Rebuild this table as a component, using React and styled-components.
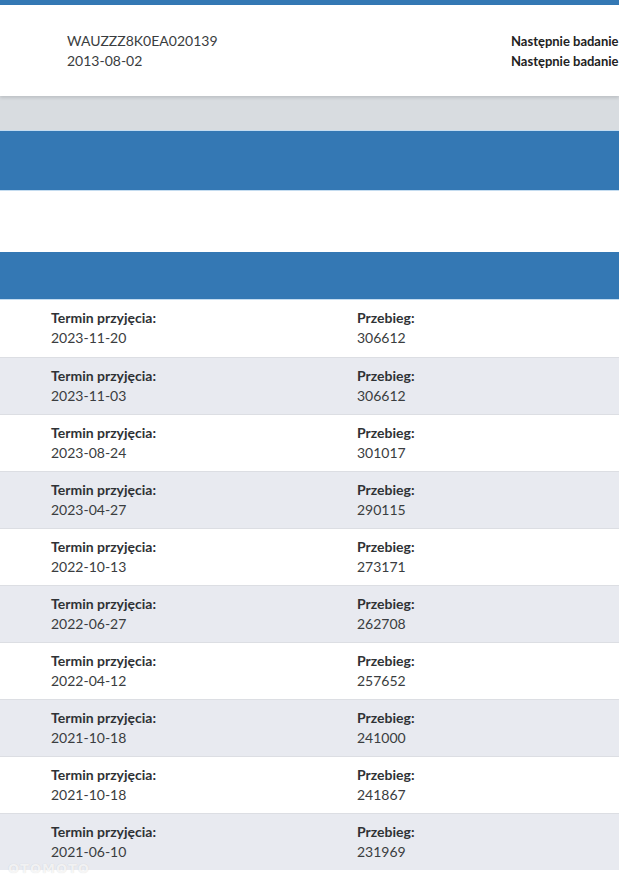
import React from 'react'
import styled, { createGlobalStyle } from 'styled-components'

const rows = [
	['2023-11-20', '306612'],
	['2023-11-03', '306612'],
	['2023-08-24', '301017'],
	['2023-04-27', '290115'],
	['2022-10-13', '273171'],
	['2022-06-27', '262708'],
	['2022-04-12', '257652'],
	['2021-10-18', '241000'],
	['2021-10-18', '241867'],
	['2021-06-10', '231969'],
]

const Global = createGlobalStyle`
	body {
		margin: 0;
		background: #fff;
		font-family: Lato, "Noto Sans", sans-serif;
		color: #333639;
		overflow: hidden;
	}
`

function HistoryRow({ date, mileage, shaded }) {
	return (
		<Row shaded={shaded}>
			<Cell>
				<Label>Termin przyjęcia:</Label>
				<Value>{date}</Value>
			</Cell>
			<Cell>
				<Label>Przebieg:</Label>
				<Value>{mileage}</Value>
			</Cell>
		</Row>
	)
}

export default function App() {
	return (
		<Page>
			<Global />
			<TopStripe />
			<Card>
				<CarInfo>
					<span>WAUZZZ8K0EA020139</span>
					<span>2013-08-02</span>
				</CarInfo>
				<NextCheck>
					<span>Następnie badanie</span>
					<span>Następnie badanie</span>
				</NextCheck>
			</Card>
			<GrayGap />
			<BlueBar height={59} />
			<WhiteGap />
			<BlueBar height={47} />
			<List>
				{rows.map((r, i) => (
					<HistoryRow key={i} date={r[0]} mileage={r[1]} shaded={i % 2 === 1} />
				))}
			</List>
			<Watermark>OTOMOTO</Watermark>
		</Page>
	)
}

const Page = styled.div`
	position: relative;
	width: 619px;
	height: 885px;
	overflow: hidden;
`
const TopStripe = styled.div`
	height: 5px;
	background: #3478b4;
`
const Card = styled.div`
	height: 91px;
	background: #fff;
	display: flex;
	align-items: center;
	box-shadow: 0 2px 3px rgba(0, 0, 0, 0.12);
	position: relative;
	z-index: 1;
`
const CarInfo = styled.div`
	display: flex;
	flex-direction: column;
	flex-shrink: 0;
	box-sizing: border-box;
	padding-left: 67px;
	width: 511px;
	font-size: 14px;
	line-height: 20px;
	color: #3a3d40;
`
const NextCheck = styled.div`
	display: flex;
	flex-direction: column;
	flex-shrink: 0;
	white-space: nowrap;
	font-size: 13px;
	font-weight: 700;
	line-height: 20px;
	color: #222;
`
const GrayGap = styled.div`
	height: 34px;
	background: #d8dce0;
	border-bottom: 1px solid #c4dcf0;
`
const BlueBar = styled.div`
	height: ${p => p.height}px;
	background: #3478b4;
	border-bottom: 1px solid #c4dcf0;
`
const WhiteGap = styled.div`
	height: 61px;
	background: #fff;
`
const List = styled.div`
	display: flex;
	flex-direction: column;
`
const Row = styled.div`
	height: 57px;
	box-sizing: border-box;
	display: flex;
	padding: 8px 0 0 51px;
	background: ${p => (p.shaded ? '#e8eaf0' : '#fff')};
	border-top: 1px solid #dcdee3;
	&:first-child {
		border-top: none;
	}
`
const Cell = styled.div`
	display: flex;
	flex-direction: column;
	flex-shrink: 0;
	width: 306px;
	font-size: 14px;
	line-height: 19.5px;
`
const Label = styled.span`
	font-weight: 700;
	color: #2f3235;
`
const Value = styled.span`
	color: #3a3d40;
`
const Watermark = styled.div`
	position: absolute;
	left: 8px;
	top: 862px;
	font-family: "DejaVu Sans", sans-serif;
	font-size: 13px;
	line-height: 13px;
	font-weight: 700;
	letter-spacing: 1px;
	color: rgba(255, 255, 255, 0.75);
	text-shadow: 0 0 1px rgba(0, 0, 0, 0.15);
`
